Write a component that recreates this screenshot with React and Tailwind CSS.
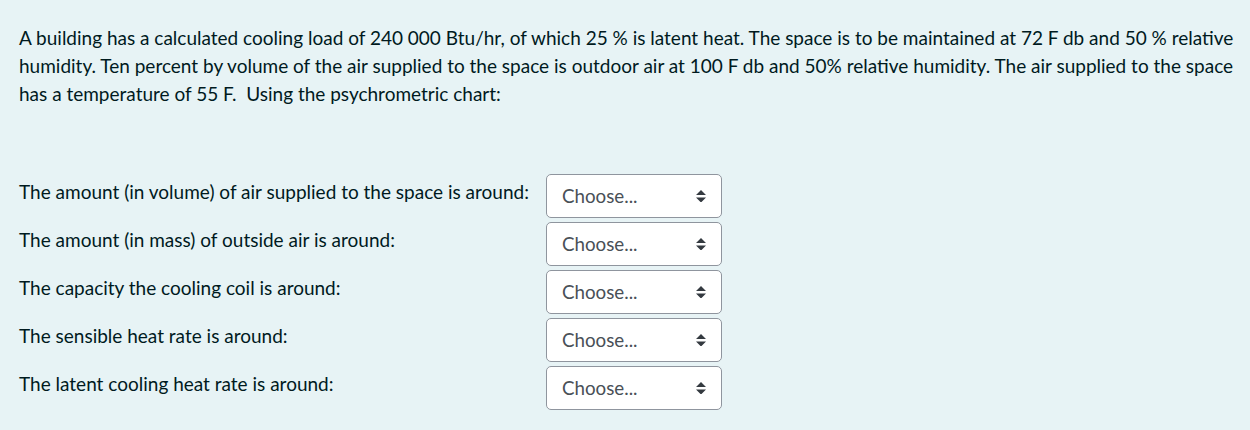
import React from "react";

const rows = [
  "The amount (in volume) of air supplied to the space is around:",
  "The amount (in mass) of outside air is around:",
  "The capacity the cooling coil is around:",
  "The sensible heat rate is around:",
  "The latent cooling heat rate is around:",
];

function Chevron() {
  return (
    <svg width="10" height="12.5" viewBox="0 0 4 5" className="shrink-0">
      <path d="M2 0L0 2h4zm0 5L0 3h4z" fill="#343a40" />
    </svg>
  );
}

function Select() {
  return (
    <div className="flex h-[44px] w-[176px] items-center justify-between rounded-[5px] border border-[#8f959e] bg-white pl-[15px] pr-[15px] text-[18.75px] text-[#495057]">
      <span>Choose...</span>
      <Chevron />
    </div>
  );
}

export default function App() {
  return (
    <div
      className="h-[430px] w-[1250px] bg-[#e7f3f5] pl-[19px] pt-[24px] text-[19px] leading-[28px] text-[#001a1e]"
      style={{ fontFamily: 'Lato, "Open Sans", sans-serif' }}
    >
      <p className="whitespace-nowrap">
        A building has a calculated cooling load of 240 000 Btu/hr, of which 25 % is latent heat. The space is to be maintained at 72 F db and 50 % relative
        <br />
        humidity. Ten percent by volume of the air supplied to the space is outdoor air at 100 F db and 50% relative humidity. The air supplied to the space
        <br />
        has a temperature of 55 F.&nbsp; Using the psychrometric chart:
      </p>
      <div className="mt-[66px] flex flex-col gap-[4px]">
        {rows.map((r) => (
          <div key={r} className="flex items-start">
            <div className="w-[527px] whitespace-nowrap pt-[4px]">{r}</div>
            <Select />
          </div>
        ))}
      </div>
    </div>
  );
}
